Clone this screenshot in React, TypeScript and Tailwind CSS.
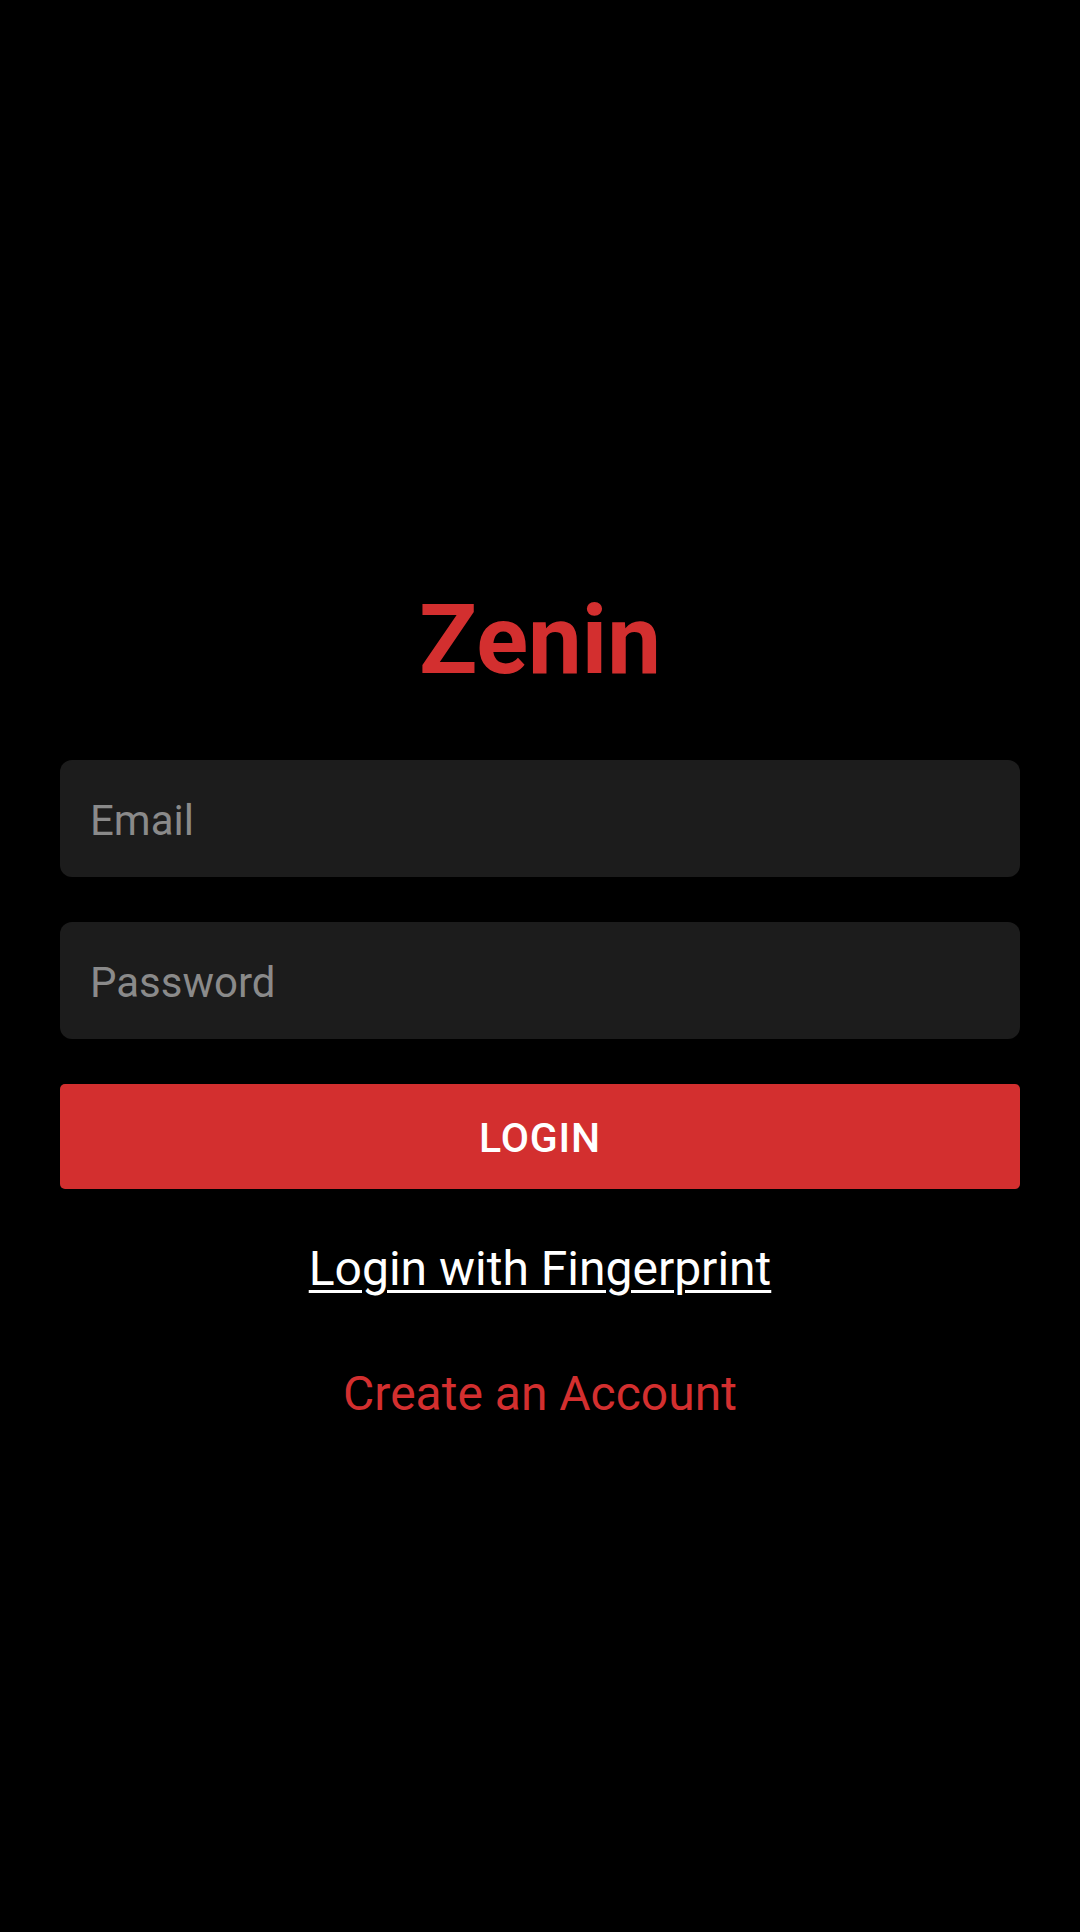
import React from 'react';

const App: React.FC = () => {
  return (
    <div
      className="min-h-[1932px] w-full bg-black flex flex-col px-[60px] pt-[592px]"
      style={{ fontFamily: 'Roboto, "Noto Sans", sans-serif' }}
    >
      {/* Brand */}
      <h1 className="text-center text-[96px] leading-none font-bold text-[#d32f2f]">Zenin</h1>

      {/* Form */}
      <div className="mt-[72px] flex flex-col gap-[45px]">
        <div className="h-[117px] rounded-[12px] bg-[#1c1c1c] flex items-center px-[30px] pt-[4px]">
          <span className="text-[42px] text-[#8a8a8a]">Email</span>
        </div>
        <div className="h-[117px] rounded-[12px] bg-[#1c1c1c] flex items-center px-[30px] pt-[4px]">
          <span className="text-[42px] text-[#8a8a8a]">Password</span>
        </div>
        <button className="h-[105px] rounded-[5px] bg-[#d32f2f] flex items-center justify-center pt-[4px]">
          <span className="text-[41px] font-medium text-white tracking-[0.02em]">LOGIN</span>
        </button>
      </div>

      {/* Links */}
      <div className="mt-[56px] flex flex-col items-center">
        <a className="text-[48px] leading-none text-white underline decoration-[3px] underline-offset-[5px]">
          Login with Fingerprint
        </a>
        <a className="mt-[77px] text-[48px] leading-none text-[#d32f2f]">Create an Account</a>
      </div>
    </div>
  );
};

export default App;
